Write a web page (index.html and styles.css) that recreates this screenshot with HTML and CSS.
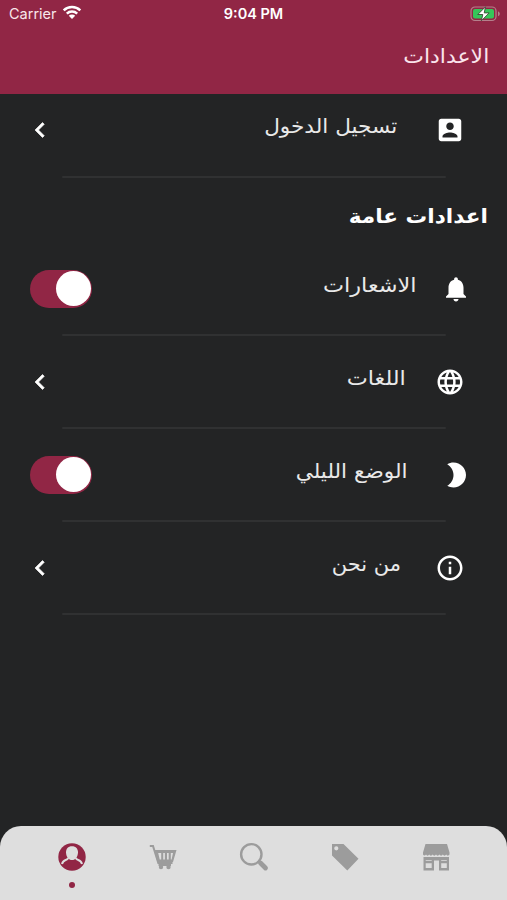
FILE: index.html
```html
<!DOCTYPE html>
<html lang="ar" dir="rtl">
<head>
<meta charset="utf-8">
<title>الاعدادات</title>
<link rel="stylesheet" href="styles.css">
</head>
<body>
<div class="app">
  <header class="header">
    <div class="status" dir="ltr">
      <div class="carrier"><span>Carrier</span>
        <svg width="20" height="16" viewBox="0 0 20 16"><g fill="none" stroke="#fff" stroke-width="2.5"><path d="M1.700 6.300a12 12 0 0 1 16.600 0"/><path d="M4.800 9.600a7.600 7.600 0 0 1 10.400 0"/></g><path fill="#fff" d="M6.800 11.700a4.600 4.600 0 0 1 6.400 0L10 15z"/></svg>
      </div>
      <div class="clock">9:04 PM</div>
      <svg class="battery" width="31" height="16" viewBox="0 0 31 16"><rect x="1" y="1" width="25" height="13.500" rx="4" fill="none" stroke="#b5808c" stroke-width="1.200"/><rect x="3" y="3" width="21" height="9.500" rx="2" fill="#35c759"/><path d="M28 5.500c2.400.7 2.400 4 0 4.700z" fill="#b5808c"/><path d="M15.500.8 7.800 8.500h5l-1.400 6.200 7.800-7.800h-5z" fill="#fff" stroke="#3a4a35" stroke-width=".9"/></svg>
    </div>
    <h1 class="title"><span>الاعدادات</span></h1>
  </header>
  <main class="content">
    <div class="row first">
      <svg class="icon" viewBox="0 0 24 24"><path d="M3 5v14c0 1.100.89 2 2 2h14c1.100 0 2-.9 2-2V5c0-1.100-.9-2-2-2H5c-1.110 0-2 .9-2 2zm12 4c0 1.660-1.340 3-3 3s-3-1.340-3-3 1.340-3 3-3 3 1.340 3 3zm-9 8c0-2 4-3.100 6-3.100s6 1.100 6 3.100v1H6v-1z"/></svg>
      <span class="label login">تسجيل الدخول</span>
      <svg class="chevron" viewBox="0 0 24 24"><path d="M15.410 7.410 14 6l-6 6 6 6 1.410-1.410L10.830 12z"/></svg>
    </div>
    <h2 class="section"><span>اعدادات عامة</span></h2>
    <div class="row toggle">
      <svg class="icon" viewBox="0 0 24 24"><path d="M12 22c1.100 0 2-.9 2-2h-4c0 1.100.89 2 2 2zm6-6v-5c0-3.070-1.640-5.640-4.500-6.320V4c0-.83-.67-1.500-1.500-1.500s-1.500.67-1.500 1.500v.68C7.630 5.360 6 7.920 6 11v5l-2 2v1h16v-1z"/></svg>
      <span class="label notifications">الاشعارات</span>
      <span class="switch"></span>
    </div>
    <div class="row">
      <svg class="icon" viewBox="0 0 24 24"><path d="M11.990 2C6.470 2 2 6.480 2 12s4.470 10 9.990 10C17.520 22 22 17.520 22 12S17.520 2 11.990 2zm6.930 6h-2.950c-.32-1.250-.78-2.450-1.380-3.560 1.840.63 3.370 1.910 4.330 3.560zM12 4.040c.83 1.200 1.480 2.530 1.910 3.960h-3.820c.43-1.430 1.080-2.760 1.910-3.960zM4.260 14C4.100 13.360 4 12.690 4 12s.1-1.360.26-2h3.380c-.08.66-.14 1.320-.14 2s.06 1.340.14 2H4.260zm.82 2h2.950c.32 1.250.78 2.450 1.380 3.560-1.840-.63-3.370-1.900-4.330-3.560zm2.950-8H5.080c.96-1.660 2.490-2.930 4.330-3.560C8.810 5.550 8.350 6.750 8.030 8zM12 19.960c-.83-1.200-1.480-2.530-1.910-3.960h3.820c-.43 1.430-1.080 2.760-1.910 3.960zM14.340 14H9.660c-.09-.66-.16-1.320-.16-2s.07-1.350.16-2h4.680c.09.65.16 1.320.16 2s-.07 1.340-.16 2zm.25 5.560c.6-1.110 1.060-2.310 1.380-3.560h2.950c-.96 1.650-2.490 2.930-4.330 3.560zM16.360 14c.08-.66.14-1.320.14-2s-.06-1.340-.14-2h3.380c.16.64.26 1.310.26 2s-.1 1.360-.26 2h-3.380z"/></svg>
      <span class="label languages">اللغات</span>
      <svg class="chevron" viewBox="0 0 24 24"><path d="M15.410 7.410 14 6l-6 6 6 6 1.410-1.410L10.830 12z"/></svg>
    </div>
    <div class="row toggle">
      <svg class="icon" viewBox="0 0 24 24"><path d="M10 2c-1.820 0-3.530.5-5 1.350C7.990 5.080 10 8.300 10 12s-2.010 6.920-5 8.650C6.470 21.500 8.180 22 10 22c5.520 0 10-4.480 10-10S15.520 2 10 2z"/></svg>
      <span class="label night">الوضع الليلي</span>
      <span class="switch"></span>
    </div>
    <div class="row">
      <svg class="icon" viewBox="0 0 24 24"><path d="M11 17h2v-6h-2v6zm1-15C6.480 2 2 6.480 2 12s4.480 10 10 10 10-4.480 10-10S17.520 2 12 2zm0 18c-4.410 0-8-3.590-8-8s3.590-8 8-8 8 3.590 8 8-3.590 8-8 8zM11 9h2V7h-2v2z"/></svg>
      <span class="label about">من نحن</span>
      <svg class="chevron" viewBox="0 0 24 24"><path d="M15.410 7.410 14 6l-6 6 6 6 1.410-1.410L10.830 12z"/></svg>
    </div>
  </main>
  <nav class="tabs" dir="ltr">
    <div class="tab active"><svg viewBox="0 0 30 30"><circle cx="15" cy="15" r="13.700"/><path fill="#dedede" d="M15 4.200c-3.900 0-6.200 2.700-6 6.500.2 3.600 2.500 7.300 6 7.300s5.800-3.700 6-7.300c.2-3.800-2.100-6.500-6-6.500z"/><path fill="none" stroke="#dedede" stroke-width="2" d="M11 15.500c.2 1.500-.7 2-2.300 2.500-2 .6-3 1.500-3.700 4M19 15.500c-.2 1.500.7 2 2.300 2.500 2 .6 3 1.500 3.700 4"/></svg><i class="dot"></i></div>
    <div class="tab"><svg viewBox="0 0 30 30"><path fill="none" stroke="currentColor" stroke-width="2" d="M1.800 4H5l5.300 17h14.200"/><path fill-rule="evenodd" d="M6 8h22.500l-3.500 12H9.500zm4.200 3 1.500 6.500h1.500V11zm5 0v6.500h1.700V11zm3.800 0v6.500h1.700V11zm3.800 0v6.500h.8L25 11z"/><circle cx="13" cy="25" r="2.200"/><circle cx="20.500" cy="25" r="2.200"/><path d="M10.500 22h12.500v2H10.500z"/></svg></div>
    <div class="tab"><svg viewBox="0 0 30 30"><circle cx="12.300" cy="12.300" r="10.200" fill="none" stroke="currentColor" stroke-width="2.400"/><path fill="none" stroke="currentColor" stroke-width="2.400" d="m19 19 3 3"/><path fill="none" stroke="currentColor" stroke-width="4.800" stroke-linecap="round" d="m21.500 21 5 5"/></svg></div>
    <div class="tab"><svg viewBox="0 0 30 30"><path fill-rule="evenodd" d="M2 2h11.500l15 14.800L17.300 28.500 2 13.500zM6.300 4.200a2.100 2.100 0 1 0 0 4.200 2.100 2.100 0 0 0 0-4.200z"/></svg></div>
    <div class="tab"><svg viewBox="0 0 30 30"><path d="M4.500 2h21.500l2.500 8.500v2c-1 1.500-2.400 1.500-3.300 0-.9 1.500-2.500 1.500-3.400 0-.9 1.500-2.500 1.500-3.400 0-.9 1.500-2.500 1.500-3.400 0-.9 1.500-2.500 1.500-3.400 0-.9 1.500-2.500 1.500-3.400 0-.9 1.500-2.300 1.500-3.200 0-.9 1.500-2.300 1.200-3 0v-2z"/><path fill-rule="evenodd" d="M2.500 15H28v13.500H18V18.500h-5v10H2.500zm2.200 6.300v4.700h6v-4.700zm15.500 0v4.700h5.600v-4.700z"/><path fill="#dedede" d="M4.700 18h6v.8h-6zm15.500 0h5.600v.8h-5.600z"/></svg></div>
  </nav>
</div>
</body>
</html>
```
FILE: styles.css
```css
* { box-sizing: border-box; }
body { margin: 0; background: #232425; color: #fff; font-family: "DejaVu Sans", sans-serif; }
.app { width: 507px; height: 900px; display: flex; flex-direction: column; overflow: hidden; }
.header { height: 94px; flex: none; background: #912645; }
.status { height: 27px; padding: 0 6px 0 9px; display: grid; grid-template-columns: 1fr auto 1fr; align-items: center; font: 14.5px Inter, sans-serif; color: #f8e6eb; }
.carrier { display: flex; align-items: center; gap: 5px; }
.carrier svg { margin-top: -3px; }
.clock { margin-right: 3px; font-weight: 600; color: #fff; }
.battery { justify-self: end; }
.title { margin: 0; padding: 13px 18px 0 0; font-size: 20px; line-height: 32px; font-weight: 400; color: #fae4ec; }
.title span, .section span, .label { display: inline-block; transform-origin: right center; }
.title span { transform: scaleX(1.1); }
.section span { transform: scaleX(1.08); }
.content { flex: 1; }
.row { height: 93px; padding: 0 42px 2px 25px; display: flex; align-items: center; position: relative; }
.row::after { content: ""; position: absolute; right: 61px; left: 62px; bottom: 0; height: 2px; border-radius: 1px; background: #303132; }
.toggle { padding: 0 36px 2px 30px; }
.first { height: 84px; padding-bottom: 12px; }
.icon, .chevron { width: 30px; height: 30px; fill: #fff; flex: none; }
.chevron { stroke: #fff; stroke-width: .5; }
.label { font-size: 20px; line-height: 30px; color: #e9e9e9; margin-top: -8px; white-space: nowrap; }
.login { margin-right: 38px; transform: scaleX(1.08); }
.notifications { margin-right: 24px; transform: scaleX(1.12); }
.languages { margin-right: 29px; transform: scaleX(1.12); }
.night { margin-right: 33px; transform: scaleX(1.08); }
.about { margin-right: 34px; transform: scaleX(1.05); }
.chevron, .switch { margin-right: auto; }
.section { margin: 0; height: 65px; padding: 20px 19px 0 0; font-size: 20px; line-height: 36px; font-weight: 700; }
.switch { width: 62px; height: 38px; border-radius: 19px; background: #912645; display: flex; align-items: center; padding: 1px; }
.switch::before { content: ""; width: 35px; height: 35px; border-radius: 50%; background: #fff; }
.tabs { height: 74px; flex: none; padding: 0 26px; border-radius: 21px 21px 0 0; background: #dedede; display: grid; grid-template-columns: repeat(5, 1fr); }
.tab { display: flex; flex-direction: column; align-items: center; padding-top: 16px; color: #9c9c9c; }
.tab svg { width: 30px; height: 30px; fill: currentColor; }
.active { color: #912645; }
.dot { width: 6px; height: 6px; margin-top: 10px; border-radius: 50%; background: #912645; }
```
